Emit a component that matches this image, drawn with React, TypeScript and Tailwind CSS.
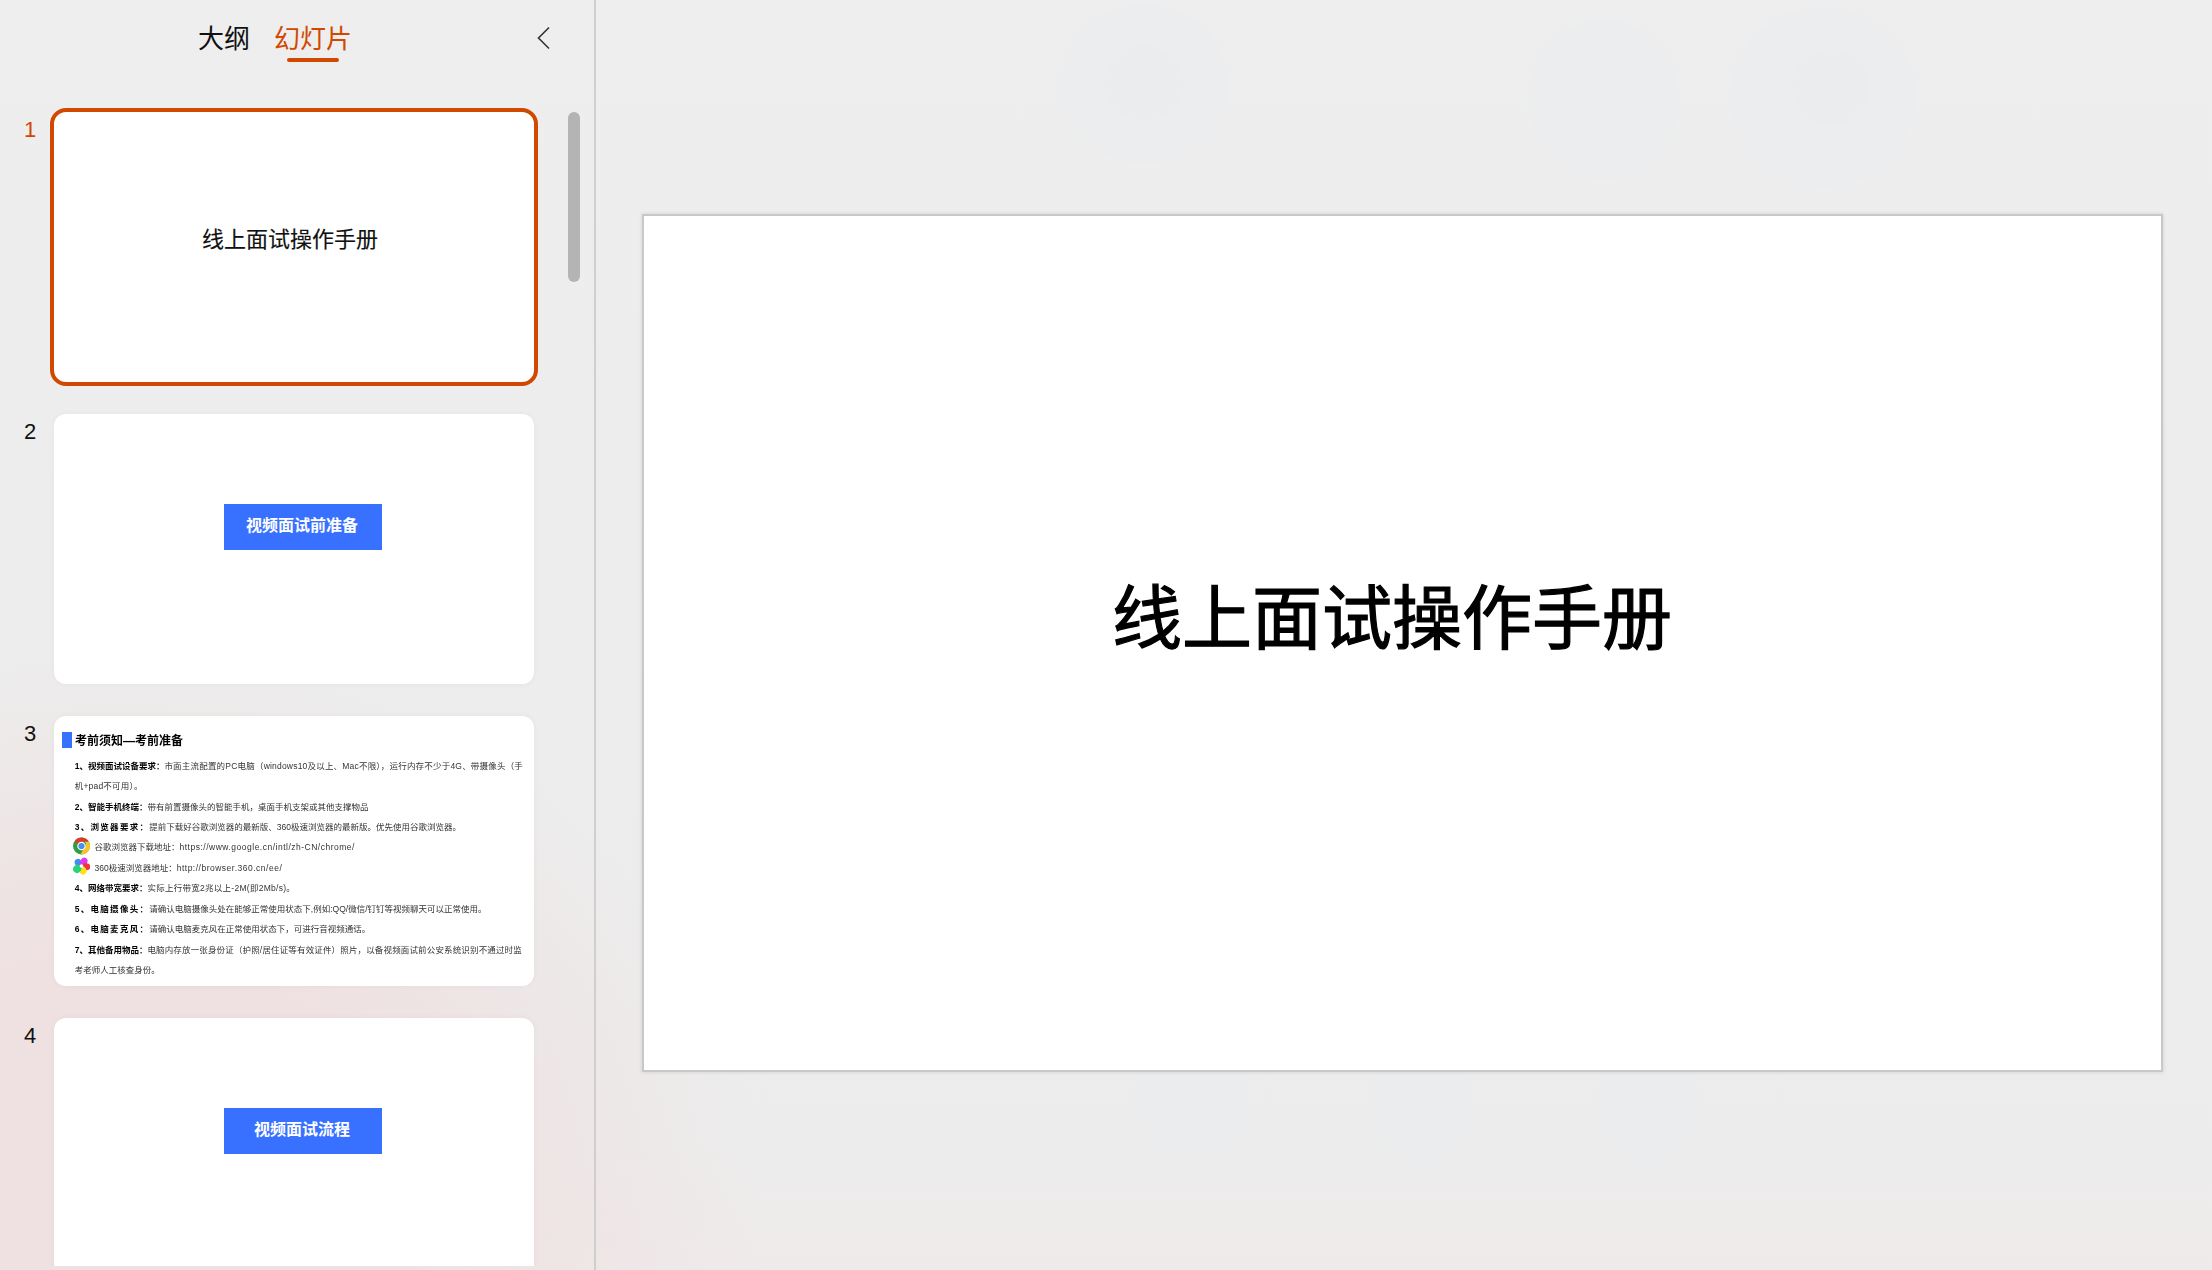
const FONT = "font-['Liberation_Sans','Noto_Sans_CJK_SC',sans-serif]";

type Line = {
  label?: string;
  text: string;
  url?: string;
  spaced?: boolean;
  icon?: "chrome" | "browser360";
  bodyClass?: string;
};

const lines: Line[] = [
  {
    label: "1、视频面试设备要求：",
    text: "市面主流配置的PC电脑（windows10及以上、Mac不限），运行内存不少于4G、带摄像头（手",
    bodyClass: "tracking-[0.2px]",
  },
  { text: "机+pad不可用）。", bodyClass: "tracking-[0.2px]" },
  { label: "2、智能手机终端：", text: "带有前置摄像头的智能手机，桌面手机支架或其他支撑物品" },
  { label: "3、浏览器要求：", text: "提前下载好谷歌浏览器的最新版、360极速浏览器的最新版。优先使用谷歌浏览器。", spaced: true },
  { icon: "chrome", text: "谷歌浏览器下载地址：", url: "https://www.google.cn/intl/zh-CN/chrome/" },
  { icon: "browser360", text: "360极速浏览器地址：", url: "http://browser.360.cn/ee/" },
  { label: "4、网络带宽要求：", text: "实际上行带宽2兆以上-2M(即2Mb/s)。", bodyClass: "tracking-[0.27px]" },
  { label: "5、电脑摄像头：", text: "请确认电脑摄像头处在能够正常使用状态下,例如:QQ/微信/钉钉等视频聊天可以正常使用。", spaced: true },
  { label: "6、电脑麦克风：", text: "请确认电脑麦克风在正常使用状态下，可进行音视频通话。", spaced: true },
  {
    label: "7、其他备用物品：",
    text: "电脑内存放一张身份证（护照/居住证等有效证件）照片，以备视频面试前公安系统识别不通过时监",
    bodyClass: "tracking-[0.15px]",
  },
  { text: "考老师人工核查身份。" },
];

function ChromeIcon() {
  return (
    <svg viewBox="0 0 24 24" className="mb-[3px] h-[18px] w-[17px] shrink-0">
      <circle cx="12" cy="12" r="12" fill="#2f9e44" />
      <path d="M2.6 4.6A12 12 0 0 1 22.4 6H12a6 6 0 0 0-5.4 3.4z" fill="#e2392d" />
      <path d="M22.4 6A12 12 0 0 1 10.4 23.9l5-8.6a6 6 0 0 0 1.4-9.3z" fill="#f7c52b" />
      <circle cx="12" cy="12" r="6" fill="#fff" />
      <circle cx="12" cy="12" r="4.4" fill="#4a8fe8" />
    </svg>
  );
}

function Browser360Icon() {
  return (
    <svg viewBox="0 0 24 24" className="mb-[5px] h-[18px] w-[17px] shrink-0">
      <ellipse cx="8" cy="8" rx="5" ry="6.5" fill="#3f8ff0" transform="rotate(-35 8 8)" />
      <ellipse cx="15" cy="6.5" rx="5" ry="6.5" fill="#d93bf0" transform="rotate(30 15 6.5)" />
      <ellipse cx="18.5" cy="13" rx="5" ry="6" fill="#ef3340" transform="rotate(85 18.5 13)" />
      <ellipse cx="14" cy="18.5" rx="5" ry="5.5" fill="#ffe01b" transform="rotate(150 14 18.5)" />
      <ellipse cx="6" cy="16" rx="5.5" ry="6" fill="#27d27a" transform="rotate(40 6 16)" />
      <circle cx="12" cy="12" r="2.6" fill="#fff" />
    </svg>
  );
}

function GuideLine({ line }: { line: Line }) {
  if (line.icon) {
    return (
      <div className="flex h-[20.4px] items-center gap-[5px] whitespace-nowrap pl-[18.5px] text-[#333]">
        {line.icon === "chrome" ? <ChromeIcon /> : <Browser360Icon />}
        <span>
          {line.text}
          <span className="tracking-[0.5px]">{line.url}</span>
        </span>
      </div>
    );
  }

  return (
    <p className="h-[20.4px] whitespace-nowrap pl-[20.7px] leading-[20.4px] text-[#333]">
      {line.label && (
        <b className={line.spaced ? "font-bold tracking-[1.3px] text-black" : "font-bold text-black"}>
          {line.label}
        </b>
      )}
      <span className={line.bodyClass}>{line.text}</span>
    </p>
  );
}

function GuideSlide() {
  return (
    <div className="overflow-hidden pt-4 text-[8.5px] blur-[0.3px]">
      <div className="flex h-4 items-center gap-[3px] pl-2">
        <div className="h-4 w-[10px] bg-[#3870ff]" />
        <h3 className="mt-[1px] text-[12px] font-bold text-black">考前须知—考前准备</h3>
      </div>
      <div className="mt-[8px]">
        {lines.map((line, index) => (
          <GuideLine key={index} line={line} />
        ))}
      </div>
    </div>
  );
}

function ButtonSlide({ title }: { title: string }) {
  return (
    <div className="pl-[170px] pt-[90px]">
      <div className="flex h-[46px] w-[158px] items-center justify-center bg-[#3870ff] pb-[2px] pr-[2px] text-[16px] font-semibold text-white">
        {title}
      </div>
    </div>
  );
}

function TitleSlide({ className }: { className: string }) {
  return (
    <div className="flex h-full w-full items-center justify-center">
      <h1 className={className}>线上面试操作手册</h1>
    </div>
  );
}

function SlideRow({
  num,
  selected,
  children,
}: {
  num: number;
  selected?: boolean;
  children: React.ReactNode;
}) {
  return (
    <div className="flex">
      <div
        className={
          selected
            ? "w-[50px] pl-6 pt-[7px] text-[22px] leading-[30px] text-[#d14900]"
            : "w-[50px] pl-6 pt-[7px] text-[22px] leading-[30px] text-[#111]"
        }
      >
        {num}
      </div>
      {selected ? (
        <div className="h-[278px] w-[488px] shrink-0 overflow-hidden rounded-[16px] border-4 border-[#d14900] bg-white">
          {children}
        </div>
      ) : (
        <div className="m-1 h-[270px] w-[480px] shrink-0 overflow-hidden rounded-xl bg-white shadow-[0_0_6px_rgba(0,0,0,0.04)]">
          {children}
        </div>
      )}
    </div>
  );
}

function Sidebar() {
  return (
    <aside className="flex h-full w-[596px] shrink-0 flex-col border-r-2 border-[#cfcfcf]">
      <header className="flex h-[108px] shrink-0 items-start pl-[198px] pr-[44px] pt-[20px]">
        <div className="flex gap-[24px] text-[26px] leading-[38px]">
          <span className="text-[#111]">大纲</span>
          <div className="flex flex-col items-center text-[#d14900]">
            <span>幻灯片</span>
            <div className="h-1 w-[52px] rounded-full bg-[#d14900]" />
          </div>
        </div>
        <svg viewBox="0 0 13 24" className="ml-auto mt-[6px] h-[24px] w-[13px] text-[#333]" fill="none">
          <path d="M12 1.5 1.5 12 12 22.5" stroke="currentColor" strokeWidth="1.6" />
        </svg>
      </header>

      <div className="flex h-[1158px] overflow-hidden">
        <div className="flex w-[568px] shrink-0 flex-col gap-6">
          <SlideRow num={1} selected>
            <div className="h-full pb-[16px] pr-[8px]">
              <TitleSlide className="text-[22px] text-[#111] [-webkit-text-stroke:0.15px_#111]" />
            </div>
          </SlideRow>
          <SlideRow num={2}>
            <ButtonSlide title="视频面试前准备" />
          </SlideRow>
          <SlideRow num={3}>
            <GuideSlide />
          </SlideRow>
          <SlideRow num={4}>
            <ButtonSlide title="视频面试流程" />
          </SlideRow>
        </div>
        <div className="mt-1 h-[170px] w-3 shrink-0 rounded-full bg-[#b4b4b4]" />
      </div>
    </aside>
  );
}

// faint blobs behind the slide, barely visible in the page background
function BackgroundBlobs() {
  return (
    <svg className="absolute inset-0 h-full w-full" viewBox="0 0 1616 1270" aria-hidden="true">
      <g fill="#ecedee">
        <ellipse cx="549" cy="85" rx="83" ry="80" />
        <ellipse cx="1008" cy="100" rx="75" ry="81" />
        <ellipse cx="1227" cy="97" rx="93" ry="90" />
      </g>
      <g fill="#ebecee">
        <ellipse cx="548" cy="83" rx="40" ry="38" />
        <ellipse cx="1235" cy="87" rx="39" ry="38" />
      </g>
      <g fill="#ebeced">
        <ellipse cx="597" cy="1090" rx="58" ry="67" />
        <ellipse cx="825" cy="1095" rx="50" ry="70" />
        <ellipse cx="1053" cy="1097" rx="50" ry="70" />
      </g>
    </svg>
  );
}

export default function App() {
  return (
    <div
      className={`flex h-screen w-screen overflow-hidden bg-[radial-gradient(ellipse_640px_560px_at_120px_1200px,#efe1e1_45%,rgba(239,225,225,0)_100%),linear-gradient(180deg,#eeeeee_0%,#ececec_90%,#efeaea_100%)] ${FONT}`}
    >
      <Sidebar />
      <main className="relative flex-1 pl-[46px] pt-[214px]">
        <BackgroundBlobs />
        <div className="relative h-[858px] w-[1521px] border-2 border-[#c8c8c8] bg-white shadow-[0_0_4px_rgba(0,0,0,0.12)]">
          <div className="h-full pb-[45px] pr-[21px]">
            <TitleSlide className="text-[70px] text-black [-webkit-text-stroke:1.2px_black]" />
          </div>
        </div>
      </main>
    </div>
  );
}
